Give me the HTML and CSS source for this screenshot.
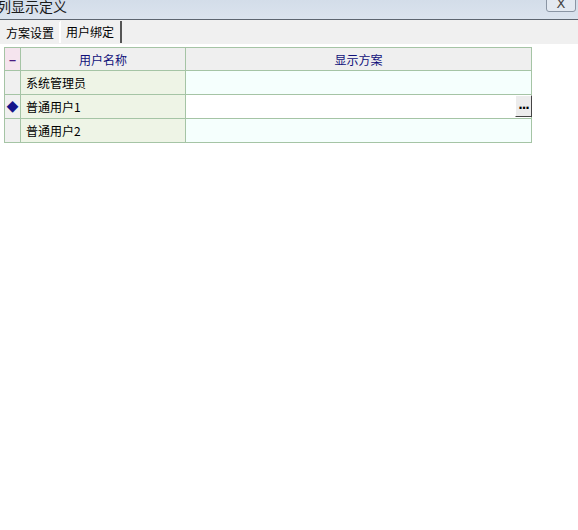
FILE: index.html
```html
<!DOCTYPE html>
<html lang="zh-CN">
<head>
    <meta charset="UTF-8">
    <title>列显示定义</title>
    <link rel="stylesheet" href="styles.css">
</head>
<body>
    <div class="titlebar">
        <span class="title">列显示定义</span>
        <span class="close-btn">X</span>
    </div>
    <div class="tabs">
        <span class="tab">方案设置</span>
        <span class="tab active">用户绑定</span>
    </div>
    <div class="panel">
        <table class="grid">
            <colgroup>
                <col class="c-ind">
                <col class="c-name">
                <col class="c-plan">
            </colgroup>
            <thead>
                <tr>
                    <th class="ind ind-head">&minus;</th>
                    <th>用户名称</th>
                    <th>显示方案</th>
                </tr>
            </thead>
            <tbody>
                <tr>
                    <td class="ind"></td>
                    <td class="name">系统管理员</td>
                    <td class="plan"></td>
                </tr>
                <tr class="current">
                    <td class="ind"><span class="marker">&#9670;</span></td>
                    <td class="name">普通用户1</td>
                    <td class="plan"><span class="ellipsis">...</span></td>
                </tr>
                <tr>
                    <td class="ind"></td>
                    <td class="name">普通用户2</td>
                    <td class="plan"></td>
                </tr>
            </tbody>
        </table>
    </div>
</body>
</html>
```

FILE: styles.css
```css
body {
    margin: 0;
    width: 578px;
    height: 530px;
    overflow: hidden;
    background: #ffffff;
    font-family: "Noto Sans CJK SC", "DejaVu Sans", sans-serif;
    font-size: 12px;
    color: #000;
}

/* window caption */
.titlebar {
    height: 19px;
    background: linear-gradient(#d3dde9, #dbe3ee);
    border-bottom: 1px solid #5d6570;
    display: flex;
    justify-content: space-between;
    align-items: flex-start;
    overflow: hidden;
}
.title {
    font-size: 14px;
    line-height: 14px;
    margin-left: -3px;
    margin-top: -1px;
    color: #1a1a1a;
}
.close-btn {
    width: 28px;
    height: 16px;
    margin-top: -6px;
    margin-right: 2px;
    border: 1px solid #8a95a4;
    border-radius: 3px;
    background: #e3e9f1;
    color: #444;
    font-family: "DejaVu Sans", sans-serif;
    font-size: 13px;
    line-height: 18px;
    text-align: center;
}

/* tab strip */
.tabs {
    height: 24px;
    background: #f0f0f0;
    display: flex;
    align-items: flex-start;
    padding-left: 1px;
}
.tab {
    height: 21px;
    line-height: 21px;
    padding: 0 5px;
    margin-top: 2px;
    border-right: 1px solid #fff;
    color: #000;
}
.tab.active {
    margin-top: 1px;
    height: 22px;
    line-height: 22px;
    padding: 0 6px 0 5px;
    border-left: 1px solid #fff;
    border-right: 2px solid #555;
}

.panel {
    padding: 3px 0 0 4px;
}

/* data grid */
.grid {
    border-collapse: collapse;
    table-layout: fixed;
    width: 528px;
}
.c-ind { width: 16px; }
.c-name { width: 165px; }
.grid th,
.grid td {
    border: 1px solid #a5c4a5;
    padding: 0;
    height: 23px;
    white-space: nowrap;
}
.grid th {
    height: 22px;
    background: #efefef;
    color: #10107a;
    font-weight: normal;
    text-align: center;
}
.grid th.ind-head {
    background: #f5e4ee;
    color: #4a1a80;
    font-weight: bold;
}
.grid td.ind {
    background: #f0f0f0;
    text-align: center;
}
.grid td.name {
    background: #eef4e6;
    padding-left: 5px;
}
.grid td.plan {
    background: #f5fffd;
    position: relative;
}
.current td.plan {
    background: #ffffff;
}
.marker {
    color: #14148a;
    font-size: 12px;
    line-height: 12px;
}

/* cell editor button */
.ellipsis {
    position: absolute;
    right: -1px;
    top: 0;
    width: 15px;
    height: 20px;
    background: #ececec;
    border-top: 1px solid #fff;
    border-left: 1px solid #fff;
    border-right: 1px solid #444;
    border-bottom: 1px solid #444;
    font-family: "DejaVu Sans", sans-serif;
    font-weight: bold;
    font-size: 12px;
    line-height: 18px;
    text-align: center;
    letter-spacing: -1px;
}
```
